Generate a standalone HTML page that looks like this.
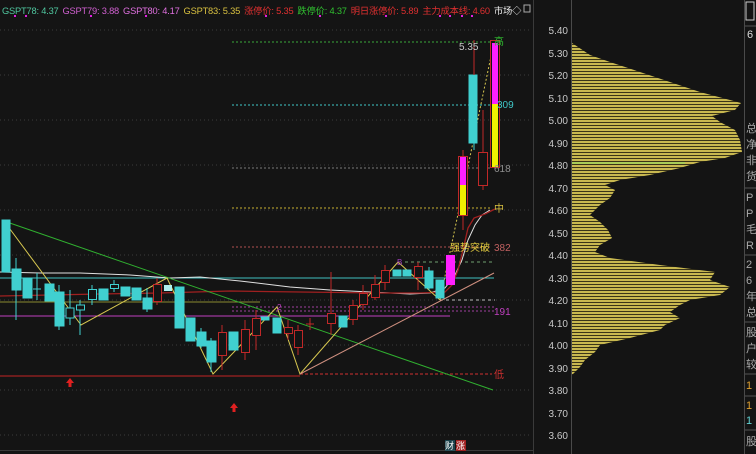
<!DOCTYPE html>
<html><head><meta charset="utf-8"><style>
html,body{margin:0;padding:0;background:#141414;width:756px;height:454px;overflow:hidden;font-family:"Liberation Sans","Noto Sans CJK SC",sans-serif}
.hdr{position:absolute;left:2px;top:3px;font-size:9.3px;white-space:nowrap;letter-spacing:-0.2px}
.hdr span{margin-right:4px}
</style></head><body>
<svg width="756" height="454" style="position:absolute;left:0;top:0" font-family="Liberation Sans, Noto Sans CJK SC, sans-serif">
<defs>
<pattern id="st" width="4" height="3" patternUnits="userSpaceOnUse"><rect width="4" height="2" fill="#c8b850"/><rect y="2" width="4" height="1" fill="#3a3418"/></pattern>
</defs>
<line x1="533.5" y1="0" x2="533.5" y2="454" stroke="#3a3a3a"/>
<line x1="571.5" y1="0" x2="571.5" y2="454" stroke="#4a4a4a"/>
<line x1="744.5" y1="0" x2="744.5" y2="454" stroke="#4a4a4a"/>
<line x1="0" y1="450.5" x2="533" y2="450.5" stroke="#3a3a3a"/>
<g stroke="#3c3c3c" stroke-dasharray="1,3">
<line x1="0" y1="30" x2="530" y2="30"/><line x1="0" y1="75" x2="530" y2="75"/><line x1="0" y1="120" x2="530" y2="120"/><line x1="0" y1="165" x2="530" y2="165"/><line x1="0" y1="210" x2="530" y2="210"/><line x1="0" y1="255" x2="530" y2="255"/><line x1="0" y1="300" x2="530" y2="300"/><line x1="0" y1="345" x2="530" y2="345"/><line x1="0" y1="390" x2="530" y2="390"/><line x1="0" y1="435" x2="530" y2="435"/>
</g>
<g fill="#c8c8c8" font-size="10" text-anchor="end">
<text x="568" y="34">5.40</text><text x="568" y="57">5.30</text><text x="568" y="79">5.20</text><text x="568" y="102">5.10</text><text x="568" y="124">5.00</text><text x="568" y="147">4.90</text><text x="568" y="169">4.80</text><text x="568" y="192">4.70</text><text x="568" y="214">4.60</text><text x="568" y="237">4.50</text><text x="568" y="259">4.40</text><text x="568" y="282">4.30</text><text x="568" y="304">4.20</text><text x="568" y="327">4.10</text><text x="568" y="349">4.00</text><text x="568" y="372">3.90</text><text x="568" y="394">3.80</text><text x="568" y="417">3.70</text><text x="568" y="439">3.60</text>
</g>
<rect x="524" y="5" width="6" height="7" fill="none" stroke="#aaa"/>
<polygon fill="url(#st)" points="572,43 578,47 590,55 610,62 640,72 670,82 700,92 730,100 741,103 735,110 712,116 720,122 735,130 740,140 742,152 725,158 700,162 680,168 650,175 620,180 605,185 615,190 610,198 600,205 595,210 590,215 600,222 608,230 612,238 600,245 595,252 610,258 660,265 715,272 710,280 730,287 720,295 690,300 680,305 670,312 680,318 665,325 660,330 630,338 600,345 595,352 585,360 580,367 572,375"/>
<line x1="572" y1="163" x2="685" y2="163" stroke="#88e060" stroke-width="1"/>
<line x1="232" y1="42" x2="498" y2="42" stroke="#3aa83a" stroke-dasharray="2,2"/>
<line x1="232" y1="105" x2="495" y2="105" stroke="#40c8c8" stroke-dasharray="2,2"/>
<line x1="232" y1="168" x2="492" y2="168" stroke="#7a7a7a" stroke-dasharray="2,2"/>
<line x1="232" y1="208" x2="492" y2="208" stroke="#c8b030" stroke-dasharray="2,2"/>
<line x1="232" y1="247" x2="492" y2="247" stroke="#b05050" stroke-dasharray="2,2"/>
<line x1="405" y1="262" x2="492" y2="262" stroke="#70a070" stroke-dasharray="3,3"/>
<line x1="0" y1="278" x2="494" y2="278" stroke="#40c0c0"/>
<line x1="440" y1="300" x2="495" y2="300" stroke="#bbb" stroke-dasharray="3,3"/>
<line x1="0" y1="302" x2="260" y2="302" stroke="#8a8a30"/>
<line x1="232" y1="307" x2="495" y2="307" stroke="#a040a0" stroke-dasharray="2,2"/>
<line x1="232" y1="311" x2="495" y2="311" stroke="#a040a0" stroke-dasharray="2,2"/>
<line x1="0" y1="316" x2="450" y2="316" stroke="#c040c0"/>
<line x1="0" y1="376" x2="300" y2="376" stroke="#a02020" stroke-width="1.3"/>
<line x1="300" y1="374" x2="492" y2="374" stroke="#d03030" stroke-dasharray="3,2"/>
<polyline fill="none" stroke="#e0e0e0" stroke-width="1" points="0,272 40,273 80,273 130,275 170,278 200,277 240,281 290,287 330,290 370,292 410,294 430,293 445,288 455,275 462,260 468,240 475,225 482,215 490,210"/>
<polyline fill="none" stroke="#a02020" stroke-width="1.3" points="0,296 50,295 100,294 160,293 230,291 300,292 380,293 420,293 445,292 452,285 458,270 463,250 468,228 474,218 485,214 495,209"/>
<line x1="4" y1="221" x2="493" y2="390" stroke="#30b030"/>
<polyline fill="none" stroke="#d8c850" stroke-width="1" points="4,221 81,325 167,278 213,374 277,307 300,374 398,262 440,300"/>
<line x1="440" y1="300" x2="494" y2="42" stroke="#d8c850" stroke-dasharray="2,2"/>
<line x1="300" y1="374" x2="494" y2="273" stroke="#d09080"/>
<g stroke-width="1">
<g fill="#40d0d0" stroke="#40d0d0">
<rect x="2" y="220" width="8" height="52"/><line x1="16" y1="258" x2="16" y2="320"/><rect x="12" y="269" width="9" height="21"/>
<rect x="23" y="278" width="9" height="20"/><rect x="45" y="284" width="9" height="17"/><line x1="59" y1="285" x2="59" y2="330"/><rect x="55" y="292" width="9" height="34"/>
<rect x="99" y="289" width="9" height="11"/><rect x="121" y="287" width="9" height="9"/><rect x="132" y="288" width="9" height="12"/><line x1="147" y1="288" x2="147" y2="312"/><rect x="143" y="298" width="9" height="11"/>
<rect x="175" y="287" width="9" height="41"/><rect x="186" y="318" width="9" height="23"/><line x1="201" y1="328" x2="201" y2="348"/><rect x="197" y="332" width="9" height="14"/><line x1="211" y1="338" x2="211" y2="372"/><rect x="207" y="341" width="9" height="21"/><rect x="229" y="332" width="9" height="18"/>
<rect x="261" y="317" width="8" height="3"/><rect x="273" y="318" width="8" height="15"/><rect x="339" y="316" width="8" height="11"/>
<rect x="393" y="270" width="8" height="6"/><rect x="403" y="270" width="8" height="6"/><line x1="429" y1="267" x2="429" y2="290"/><rect x="425" y="271" width="8" height="17"/><rect x="436" y="280" width="8" height="18"/>
<line x1="474" y1="42" x2="474" y2="150"/><rect x="469" y="75" width="8" height="68"/>
</g>
<g fill="#141414" stroke="#40d0d0">
<line x1="37" y1="273" x2="37" y2="300"/><line x1="33" y1="289" x2="41" y2="289"/>
<line x1="70" y1="290" x2="70" y2="325"/><rect x="66" y="308" width="8" height="10"/>
<line x1="80" y1="300" x2="80" y2="335"/><rect x="76.5" y="305" width="8" height="5"/>
<line x1="92" y1="285" x2="92" y2="305"/><rect x="88.5" y="289.5" width="8" height="10"/>
<line x1="114" y1="280" x2="114" y2="292"/><rect x="110.5" y="284.5" width="8" height="4"/>
</g>
<rect x="164" y="285" width="8" height="6" fill="#b0f0f0"/>
<g fill="#141414" stroke="#c02828">
<line x1="157" y1="278" x2="157" y2="305"/><rect x="153.5" y="284.5" width="8" height="17"/>
<line x1="222" y1="325" x2="222" y2="370"/><rect x="218.5" y="332.5" width="8" height="23"/>
<line x1="245" y1="320" x2="245" y2="360"/><rect x="241.5" y="329.5" width="8" height="23"/>
<line x1="256" y1="310" x2="256" y2="350"/><rect x="252.5" y="318.5" width="8" height="17"/>
<line x1="288" y1="320" x2="288" y2="340"/><rect x="284.5" y="327.5" width="8" height="6"/>
<line x1="298" y1="325" x2="298" y2="355"/><rect x="294.5" y="330.5" width="8" height="17"/>
<line x1="310" y1="318" x2="310" y2="330"/><line x1="306" y1="324" x2="314" y2="324"/>
<line x1="331" y1="272" x2="331" y2="335"/><rect x="327.5" y="313.5" width="8" height="10"/>
<line x1="353" y1="300" x2="353" y2="325"/><rect x="349.5" y="305.5" width="8" height="14"/>
<line x1="363" y1="285" x2="363" y2="310"/><rect x="359.5" y="293.5" width="8" height="11"/>
<line x1="375" y1="275" x2="375" y2="300"/><rect x="371.5" y="284.5" width="8" height="13"/>
<line x1="385" y1="265" x2="385" y2="290"/><rect x="381.5" y="270.5" width="8" height="12"/>
<line x1="418" y1="262" x2="418" y2="290"/><rect x="414.5" y="266.5" width="8" height="11"/>
<line x1="483" y1="110" x2="483" y2="190"/><rect x="478.5" y="152.5" width="9" height="33"/>
<line x1="463" y1="150" x2="463" y2="230"/><rect x="458.5" y="156.5" width="9" height="59"/>
<line x1="474" y1="40" x2="474" y2="75" stroke="#c02828"/>
<rect x="490.5" y="40.5" width="9" height="127"/>
</g>
<rect x="446" y="255" width="9" height="30" fill="#ff20ff"/>
<rect x="460" y="157" width="6" height="28" fill="#ff20ff"/><rect x="460" y="185" width="6" height="30" fill="#f0f000"/>
<rect x="492" y="43" width="6" height="61" fill="#ff20ff"/><rect x="492" y="104" width="6" height="63" fill="#f0f000"/>
</g>
<g font-size="10">
<text x="459" y="50" fill="#c8c8c8">5.35</text>
<text x="494" y="45" fill="#30c030">高</text>
<text x="497" y="108" fill="#40c8c8">309</text>
<text x="494" y="172" fill="#909090">618</text>
<text x="494" y="212" fill="#d8c040">中</text>
<text x="494" y="251" fill="#c06060">382</text>
<text x="450" y="251" fill="#e8d040">强势突破</text>
<text x="494" y="315" fill="#c040c0">191</text>
<text x="494" y="378" fill="#d03030">低</text>
<text x="397" y="265" fill="#a040c0" font-size="8">B</text>
<text x="277" y="310" fill="#c040c0" font-size="8">2</text>
<rect x="445" y="440" width="10" height="11" fill="#206070" opacity="0.6"/>
<text x="445" y="449" fill="#fff" font-size="9">财</text>
<rect x="456" y="440" width="10" height="11" fill="#a02020"/><text x="456" y="449" fill="#fff" font-size="9">涨</text>
</g>
<g fill="#e02020"><polygon points="70,378 66,383 68.5,383 68.5,387 71.5,387 71.5,383 74,383"/><polygon points="234,403 230,408 232.5,408 232.5,412 235.5,412 235.5,408 238,408"/></g>
<g font-size="11" fill="#aaa">
<rect x="746" y="2" width="8" height="18" fill="none" stroke="#ccc"/>
<line x1="745" y1="26" x2="756" y2="26" stroke="#555"/>
<text x="747" y="38" fill="#ddd">6</text>
<text x="746" y="132">总</text><text x="746" y="148">净</text><text x="746" y="164">非</text><text x="746" y="180">货</text>
<line x1="745" y1="188" x2="756" y2="188" stroke="#555"/>
<text x="746" y="201">P</text><text x="746" y="217">P</text><text x="746" y="233">毛</text><text x="746" y="249">R</text>
<line x1="745" y1="255" x2="756" y2="255" stroke="#555"/>
<text x="746" y="268">2</text><text x="746" y="284">6</text><text x="746" y="300">年</text><text x="746" y="316">总</text>
<line x1="745" y1="322" x2="756" y2="322" stroke="#555"/>
<text x="746" y="336">股</text><text x="746" y="352">户</text><text x="746" y="368">较</text>
<line x1="745" y1="374" x2="756" y2="374" stroke="#555"/>
<text x="746" y="389" fill="#e0a030">1</text>
<line x1="745" y1="396" x2="756" y2="396" stroke="#555"/>
<text x="746" y="409" fill="#e0a030">1</text><text x="746" y="424" fill="#60d0d0">1</text>
<line x1="745" y1="430" x2="756" y2="430" stroke="#555"/>
<text x="746" y="445">股</text>
</g>
</svg>
<div class="hdr">
<span style="color:#50c8a0">GSPT78: 4.37</span><span style="color:#d060d0">GSPT79: 3.88</span><span style="color:#e070e0">GSPT80: 4.17</span><span style="color:#d8c040">GSPT83: 5.35</span><span style="color:#e03030">涨停价: 5.35</span><span style="color:#30c030">跌停价: 4.37</span><span style="color:#e03030">明日涨停价: 5.89</span><span style="color:#e03030">主力成本线: 4.60</span><span style="color:#eee">市场◇</span>
</div>
<svg width="520" height="20" style="position:absolute;left:0;top:0"><g fill="#e020e0"><rect x="14" y="15" width="2" height="2"/><rect x="25" y="15" width="2" height="2"/><rect x="90" y="15" width="2" height="2"/><rect x="145" y="15" width="2" height="2"/><rect x="265" y="15" width="2" height="2"/><rect x="319" y="15" width="2" height="2"/><rect x="385" y="15" width="2" height="2"/><rect x="439" y="15" width="2" height="2"/><rect x="449" y="15" width="2" height="2"/><rect x="461" y="15" width="2" height="2"/><rect x="471" y="15" width="2" height="2"/></g></svg>
</body></html>
